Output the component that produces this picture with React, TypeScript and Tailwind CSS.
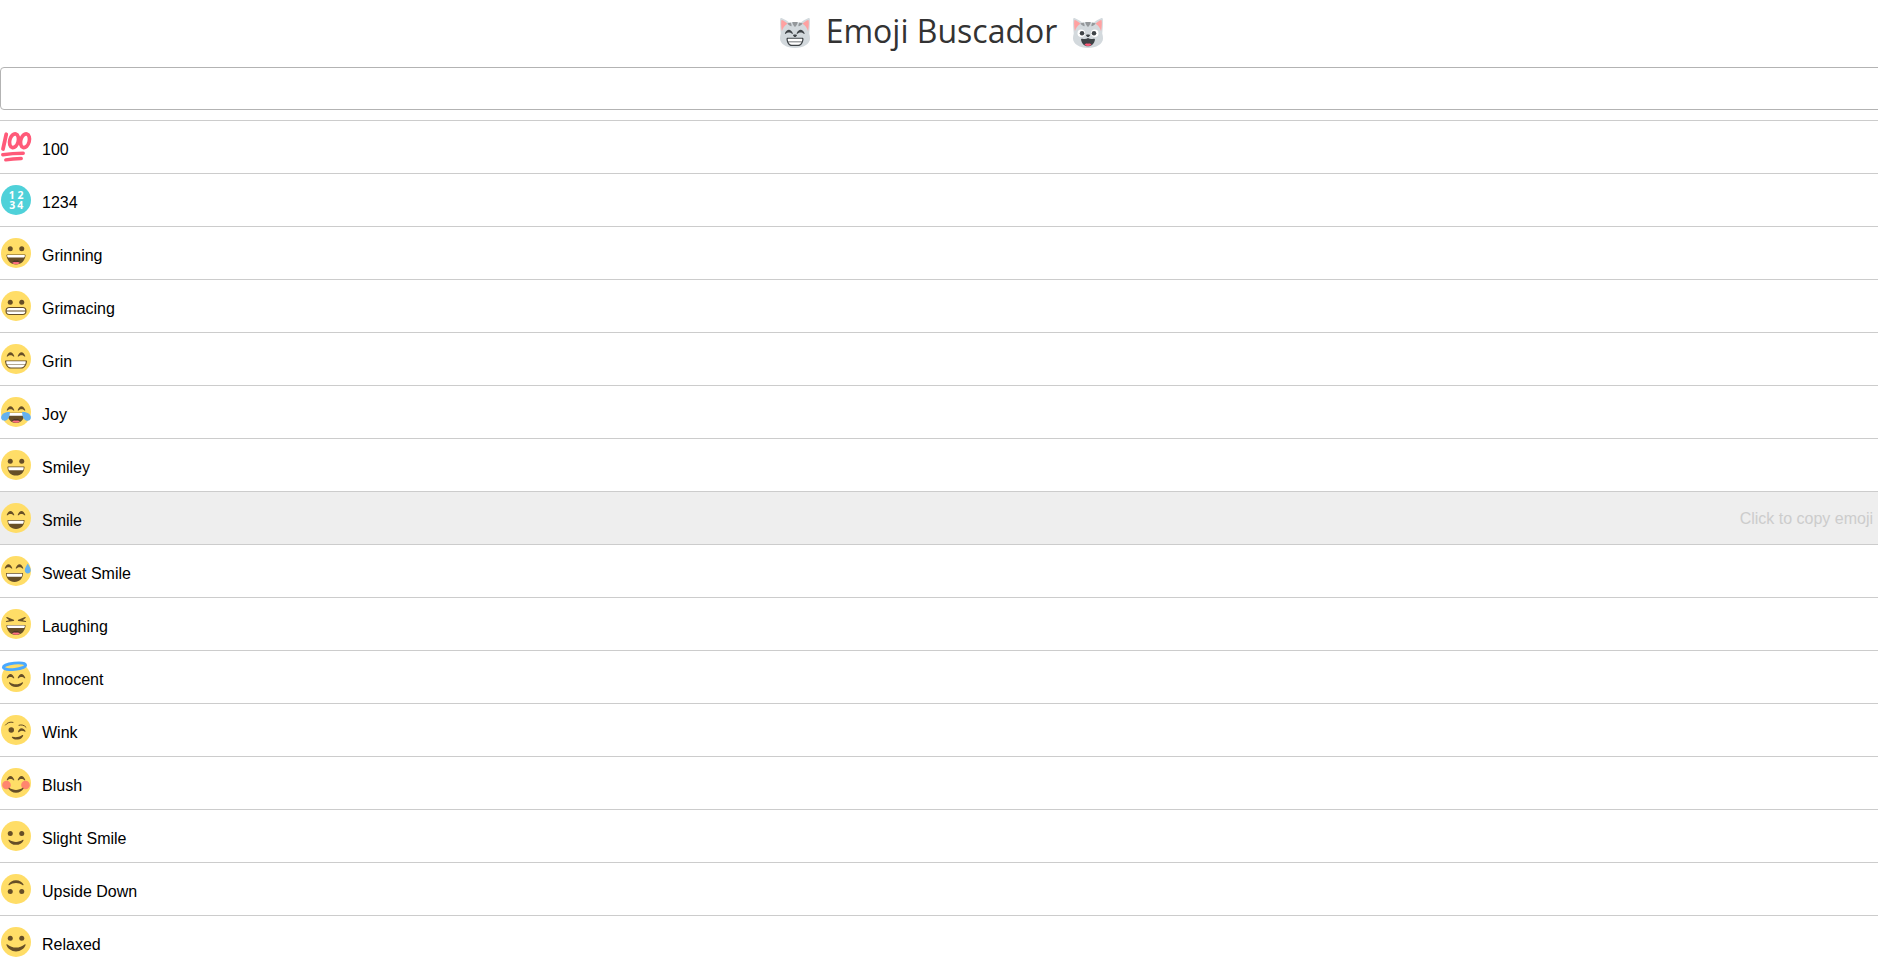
import type { ReactNode } from "react";

const BROWN = "#664e27";

function Svg({ children }: { children: ReactNode }) {
  return (
    <svg viewBox="0 0 64 64" className="block size-8 shrink-0" fill="none" aria-hidden="true">
      {children}
    </svg>
  );
}

function Face({ children }: { children: ReactNode }) {
  return (
    <Svg>
      <circle cx="32" cy="32" r="30" fill="#ffdd67" />
      {children}
    </Svg>
  );
}

function RoundEyes({ y }: { y: number }) {
  return (
    <g fill={BROWN}>
      <circle cx="20.5" cy={y} r="5" />
      <circle cx="43.5" cy={y} r="5" />
    </g>
  );
}

const ARCH =
  "M28.5 7.5C26.6 2.6 23.9 0 21 0s-5.700 2.6-7.500 7.500c-.3.9.8 1.700 1.500 1C16.8 6.700 18.9 6 21 6s4.200.7 6 2.500c.8.7 1.800-.1 1.500-1z";

function ArchEyes({ y, x = 0 }: { y: number; x?: number }) {
  return (
    <g fill={BROWN}>
      <path d={ARCH} transform={`translate(${x} ${y})`} />
      <path d={ARCH} transform={`translate(${x + 22} ${y})`} />
    </g>
  );
}

function TongueMouth() {
  return (
    <>
      <path d="M49.500 35h-35c-1.500 0-1.700 1-1.500 2.500C14.300 47 21 55 32 55s17.700-8 19-17.500c.2-1.500 0-2.500-1.500-2.500z" fill={BROWN} />
      <path d="M48.500 36h-33c-1.200 0-1.500 1-1 3.200.2.900.7 1.800 1.700 1.800h31.600c1 0 1.500-.9 1.700-1.800.5-2.200.2-3.200-1-3.200z" fill="#fff" />
      <path d="M32 47.500c-1.500-2-6-1.500-8 4.500 4.500 2.700 11.500 2.700 16 0-2-6-6.500-6.500-8-4.500z" fill="#4c3526" />
      <path d="M32 50.500c-3.500-.7-6.500 0-8 1.500 4.500 3.300 11.500 3.300 16 0-1.500-1.500-4.500-2.200-8-1.500z" fill="#ff717f" />
    </>
  );
}

function OpenMouth({ x = 0, y = 0 }: { x?: number; y?: number }) {
  return (
    <g transform={`translate(${x} ${y})`}>
      <path d="M47.500 35h-31c-1.300 0-1.700.8-1.500 2.300C16.200 46.500 21.500 53 32 53s15.800-6.500 17-15.700c.2-1.500-.2-2.300-1.500-2.300z" fill={BROWN} />
      <path d="M46 36.500H18c-1.500 0-1.700.8-1.200 3 .4 2 1 3 2.700 3h25c1.700 0 2.300-1 2.700-3 .5-2.200.3-3-1.200-3z" fill="#fff" />
    </g>
  );
}

function Hundred() {
  return (
    <Svg>
      <g stroke="#ff5a79" strokeLinecap="round">
        <path d="M12.500 6.500 6 36" strokeWidth="7.500" />
        <ellipse cx="28" cy="19.500" rx="8.500" ry="14" strokeWidth="7.300" transform="rotate(15 28 19.500)" />
        <ellipse cx="50" cy="19.500" rx="8.500" ry="14" strokeWidth="7.300" transform="rotate(15 50 19.500)" />
        <path d="M5.500 47.500Q25 44.500 46.500 44.500" strokeWidth="6.800" />
        <path d="M11.500 57.800Q25 55.500 42.500 55" strokeWidth="6.800" />
      </g>
    </Svg>
  );
}

function Numbers() {
  return (
    <Svg>
      <circle cx="32" cy="32" r="30" fill="#4fd1d9" />
      <text fill="#fff" className="font-['Open_Sans',sans-serif] text-[21px] font-bold">
        <tspan x="17.500 35" y="29.500">12</tspan>
        <tspan x="18.500 34.500" y="50">34</tspan>
      </text>
    </Svg>
  );
}

function Grinning() {
  return (
    <Face>
      <RoundEyes y={23.5} />
      <TongueMouth />
    </Face>
  );
}

function Grimacing() {
  return (
    <Face>
      <RoundEyes y={24.5} />
      <rect x="11" y="34" width="42" height="16" rx="8" fill={BROWN} />
      <path d="M18 36.200h28c3 0 4.500 2 4.800 4.800H13.200c.3-2.800 1.800-4.800 4.800-4.800zM13.200 43h37.600c-.3 2.800-1.800 4.800-4.800 4.800H18c-3 0-4.500-2-4.800-4.800z" fill="#fff" />
    </Face>
  );
}

function Grin() {
  return (
    <Face>
      <ArchEyes y={18.500} />
      <path d="M12 35h40c1.500 0 2 .8 1.800 2.300C52.600 46 48 51 42 51H22c-6 0-10.600-5-11.800-13.700C10 35.800 10.500 35 12 35z" fill={BROWN} />
      <path d="M14 36.500h36c1.500 0 1.700.8 1.300 2.800l-.8 3h-37l-.8-3c-.4-2-.2-2.800 1.300-2.800zM14.200 43.700h35.600c-1.400 3.300-4 5.300-7.800 5.300H22c-3.800 0-6.400-2-7.800-5.300z" fill="#fff" />
    </Face>
  );
}

function Joy() {
  return (
    <Face>
      <ArchEyes y={20.5} />
      <path d="M48 33.500H16c-1 0-1.500.5-1.300 2C16 46 21 54 32 54s16-8 17.300-18.500c.2-1.500-.3-2-1.300-2z" fill={BROWN} />
      <path d="M47 34H17c-1 0-1 1 0 4 .3.900.8 1.500 2 1.500h26c1.200 0 1.700-.6 2-1.500 1-3 1-4 0-4z" fill="#fff" />
      <path d="M32 46.500c-1.500-2-6-1.500-8 4.500 4.500 2.700 11.500 2.700 16 0-2-6-6.500-6.500-8-4.500z" fill="#4c3526" />
      <path d="M32 49.500c-3.500-.7-6.500 0-8 1.500 4.500 3.300 11.500 3.300 16 0-1.500-1.500-4.500-2.200-8-1.500z" fill="#ff717f" />
      <path d="M20 32c-3-.6-9.500-.3-14 3.500C2 39 1 44 3.500 47.200c2.700 3.400 8 3 11.500-.2 4-3.700 4.500-11 5-15z" fill="#65b1ef" />
      <path d="M44 32c3-.6 9.500-.3 14 3.500C62 39 63 44 60.500 47.200c-2.700 3.400-8 3-11.500-.2-4-3.700-4.500-11-5-15z" fill="#65b1ef" />
    </Face>
  );
}

function Smiley() {
  return (
    <Face>
      <RoundEyes y={24.5} />
      <OpenMouth />
    </Face>
  );
}

function Smile() {
  return (
    <Face>
      <ArchEyes y={18} />
      <OpenMouth y={0.8} />
    </Face>
  );
}

function SweatSmile() {
  return (
    <Face>
      <ArchEyes y={18.5} x={-4} />
      <OpenMouth x={-3} y={0.8} />
      <path d="M61.500 30.500c0 3.800-2.500 6.500-6 6.500s-6-2.700-6-6.500C49.500 26 53.500 21 55.500 17c2 4 6 9 6 13.500z" fill="#65b1ef" />
    </Face>
  );
}

function Laughing() {
  return (
    <Face>
      <path d="M27.500 23.500 14 18.200c-1-.4-1.800 1-1 1.800l5.500 4.500-6 1.700c-1.200.4-1 2 .2 2l14.500-2.200c1.400-.3 1.500-2 .3-2.500zM36.500 23.500 50 18.200c1-.4 1.800 1 1 1.800l-5.500 4.500 6 1.700c1.200.4 1 2-.2 2l-14.500-2.200c-1.400-.3-1.500-2-.3-2.500z" fill={BROWN} />
      <g transform="translate(0 -1)">
        <TongueMouth />
      </g>
    </Face>
  );
}

function Innocent() {
  return (
    <Svg>
      <circle cx="32.500" cy="33" r="29" fill="#ffdd67" />
      <ellipse cx="29" cy="10.500" rx="22.500" ry="6.300" fill="#ffdd67" stroke="#4aa9ff" strokeWidth="5.500" transform="rotate(-6 29 10.500)" />
      <ArchEyes y={26} />
      <path d="M44.600 42.500c-8 5.400-17.200 5.400-25.200 0-1-.6-1.800.6-1.200 1.800C20.700 48.500 25.400 52 32 52s11.300-3.500 13.800-7.700c.6-1.200-.3-2.400-1.200-1.800z" fill={BROWN} />
    </Svg>
  );
}

function Wink() {
  return (
    <Face>
      <circle cx="22.500" cy="32" r="5.500" fill={BROWN} />
      <path d="M51 34c-2.500-3.800-5-5.700-8-5.500-3.200.2-5.500 2.500-7 7-.3 1 .7 1.500 1.500.8 1.700-1.700 3.700-2.800 6-3 2.300 0 4.300.6 6.300 2 .9.500 1.700-.4 1.200-1.300z" fill={BROWN} />
      <path d="M11 22c3.500-4.800 9.200-6.800 15-5.300M38 22.500c5.500-1.700 10.500-.3 14 4" stroke={BROWN} strokeWidth="2" strokeLinecap="round" />
      <path d="M44.800 42.200c-6.500 4.200-13 5.300-19.800 3.500-1.200-.3-1.700.8-.9 1.700 2.700 3 6.800 4.300 11.700 3.700 5-.7 8.700-3.300 10.400-7.300.5-1.300-.3-2.300-1.400-1.600z" fill={BROWN} />
    </Face>
  );
}

function Blush() {
  return (
    <Face>
      <circle cx="13" cy="36" r="8.700" fill="#ff7171" opacity=".8" />
      <circle cx="51" cy="36" r="8.700" fill="#ff7171" opacity=".8" />
      <ArchEyes y={18} />
      <path d="M45.600 41.700c-8.300 5.700-18.900 5.700-27.200 0-1-.6-1.900.6-1.200 1.800C19.700 47.900 25 51.500 32 51.500s12.300-3.600 14.800-8c.6-1.200-.2-2.400-1.200-1.800z" fill={BROWN} />
    </Face>
  );
}

function SlightFeatures() {
  return (
    <>
      <RoundEyes y={27} />
      <path d="M45.600 39.500c-8.300 5.700-18.900 5.700-27.200 0-1-.6-1.900.6-1.200 1.800 2.500 4.800 7.800 8.400 14.800 8.400s12.300-3.600 14.800-8.400c.6-1.200-.2-2.400-1.200-1.800z" fill={BROWN} />
    </>
  );
}

function SlightSmile() {
  return (
    <Face>
      <SlightFeatures />
    </Face>
  );
}

function UpsideDown() {
  return (
    <Face>
      <g transform="rotate(180 32 32)">
        <SlightFeatures />
      </g>
    </Face>
  );
}

function Relaxed() {
  return (
    <Face>
      <RoundEyes y={24.5} />
      <path d="M49.200 36.800c-9.800 8.200-24.600 8.200-34.400 0-1.200-1-2.600.2-1.800 1.900C15.800 45.500 22.800 51 32 51s16.200-5.500 19-12.300c.8-1.700-.6-2.900-1.800-1.900z" fill={BROWN} />
    </Face>
  );
}

const INK = "#3e4347";

function CatHead({ children }: { children: ReactNode }) {
  return (
    <Svg>
      <path d="M60.500 33c.8-8 1.500-18 1.200-28-.1-2.200-1.700-3.300-3.700-2.500C52.500 4.700 47 8 43 11.500c-7.200-1.700-14.800-1.700-22 0C17 8 11.500 4.700 6 2.500 4 1.700 2.400 2.800 2.300 5c-.3 10 .4 20 1.200 28C2.500 36 2 39.500 2 43c0 11 13.500 19 30 19s30-8 30-19c0-3.500-.5-7-1.500-10z" fill="#d3d9dd" />
      <path d="M5.500 6c-1.800 0-1.500 14 .5 22 1.500-6 6-11.500 11-14.500C13.500 10 9 7 5.500 6zM58.500 6c1.800 0 1.500 14-.5 22-1.500-6-6-11.500-11-14.500C50.500 10 55 7 58.500 6z" fill="#ffa1a1" />
      <path d="M26.500 10.200h11c-.5 4-2.700 8-5.500 9.800-2.800-1.800-5-5.800-5.500-9.800zM16.500 12.800 23 11.200c1.700 2.300 2.300 4.800 2.200 7.300-3.500-.8-6.500-2.700-8.700-5.700zM47.500 12.800 41 11.200c-1.700 2.300-2.300 4.800-2.200 7.300 3.500-.8 6.500-2.700 8.700-5.700z" fill="#94989b" />
      <path d="M28 35.800c0-1.400 8-1.400 8 0 0 1.700-2.200 4.200-4 4.200s-4-2.500-4-4.200z" fill={INK} />
      {children}
    </Svg>
  );
}

function GrinningCat() {
  return (
    <CatHead>
      <g fill={INK}>
        <path d={ARCH} transform="translate(-2.500 25.500) scale(1.060 .95)" />
        <path d={ARCH} transform="translate(21 25.500) scale(1.060 .95)" />
      </g>
      <path d="M17.500 41.500h29c2 0 2.800 1.300 2.500 3.300C48 52.500 44 58 38.500 58h-13C20 58 16 52.500 15 44.800c-.3-2 .5-3.300 2.500-3.300z" fill={INK} />
      <path d="M19 43.500h26c1.300 0 1.700.7 1.500 2l-.8 3.500H18.300l-.8-3.500c-.2-1.300.2-2 1.500-2zM19 50.700h26c-1.200 3.200-3.500 5-6.500 5h-13c-3 0-5.300-1.800-6.500-5z" fill="#fff" />
    </CatHead>
  );
}

function SmileyCat() {
  return (
    <CatHead>
      <circle cx="18.500" cy="32.500" r="7.500" fill="#fff" />
      <circle cx="45.500" cy="32.500" r="7.500" fill="#fff" />
      <circle cx="20" cy="32.500" r="4.500" fill={INK} />
      <circle cx="44" cy="32.500" r="4.500" fill={INK} />
      <path d="M21 43.500c4 1.200 8 .8 11-1.500 3 2.300 7 2.700 11 1.500 2-.5 3.300.5 2.800 2.700C44.500 53.200 39.500 58.700 32 58.700s-12.500-5.500-13.800-12.500c-.5-2.200.8-3.200 2.800-2.700z" fill={INK} />
      <path d="M25 55.500c1.800-2.500 5-3.500 7-2 2-1.500 5.200-.5 7 2-4.300 3.500-9.700 3.500-14 0z" fill="#ff5a79" />
    </CatHead>
  );
}

const emojis = [
  { name: "100", Icon: Hundred },
  { name: "1234", Icon: Numbers },
  { name: "Grinning", Icon: Grinning },
  { name: "Grimacing", Icon: Grimacing },
  { name: "Grin", Icon: Grin },
  { name: "Joy", Icon: Joy },
  { name: "Smiley", Icon: Smiley },
  { name: "Smile", Icon: Smile, active: true },
  { name: "Sweat Smile", Icon: SweatSmile },
  { name: "Laughing", Icon: Laughing },
  { name: "Innocent", Icon: Innocent },
  { name: "Wink", Icon: Wink },
  { name: "Blush", Icon: Blush },
  { name: "Slight Smile", Icon: SlightSmile },
  { name: "Upside Down", Icon: UpsideDown },
  { name: "Relaxed", Icon: Relaxed },
];

export default function App() {
  return (
    <div className="h-screen overflow-hidden bg-white font-['Liberation_Sans',Arial,sans-serif] text-base text-black">
      <header className="flex h-[67px] items-start justify-center gap-[15px] pt-[17px] pl-[5px]">
        <GrinningCat />
        <h1 className="-mt-2 font-['Open_Sans',sans-serif] text-[32px] leading-[44px] font-normal text-[#333]">
          Emoji Buscador
        </h1>
        <SmileyCat />
      </header>
      <input
        type="text"
        className="block h-[43px] w-[calc(100%+16px)] rounded-[4px] border border-[#b3b3b3] px-2 outline-none"
      />
      <ul className="mt-[10px]">
        {emojis.map(({ name, Icon, active }) => (
          <li
            key={name}
            className={
              active
                ? "flex h-[53px] items-start border-t border-[#ccc] bg-[#eee] pt-[10px]"
                : "flex h-[53px] items-start border-t border-[#ccc] pt-[10px]"
            }
          >
            <Icon />
            <span className="mt-[10px] ml-[10px] leading-[18px]">{name}</span>
            {active && <span className="mt-2 mr-[5px] ml-auto leading-[18px] text-[#ccc]">Click to copy emoji</span>}
          </li>
        ))}
      </ul>
    </div>
  );
}
